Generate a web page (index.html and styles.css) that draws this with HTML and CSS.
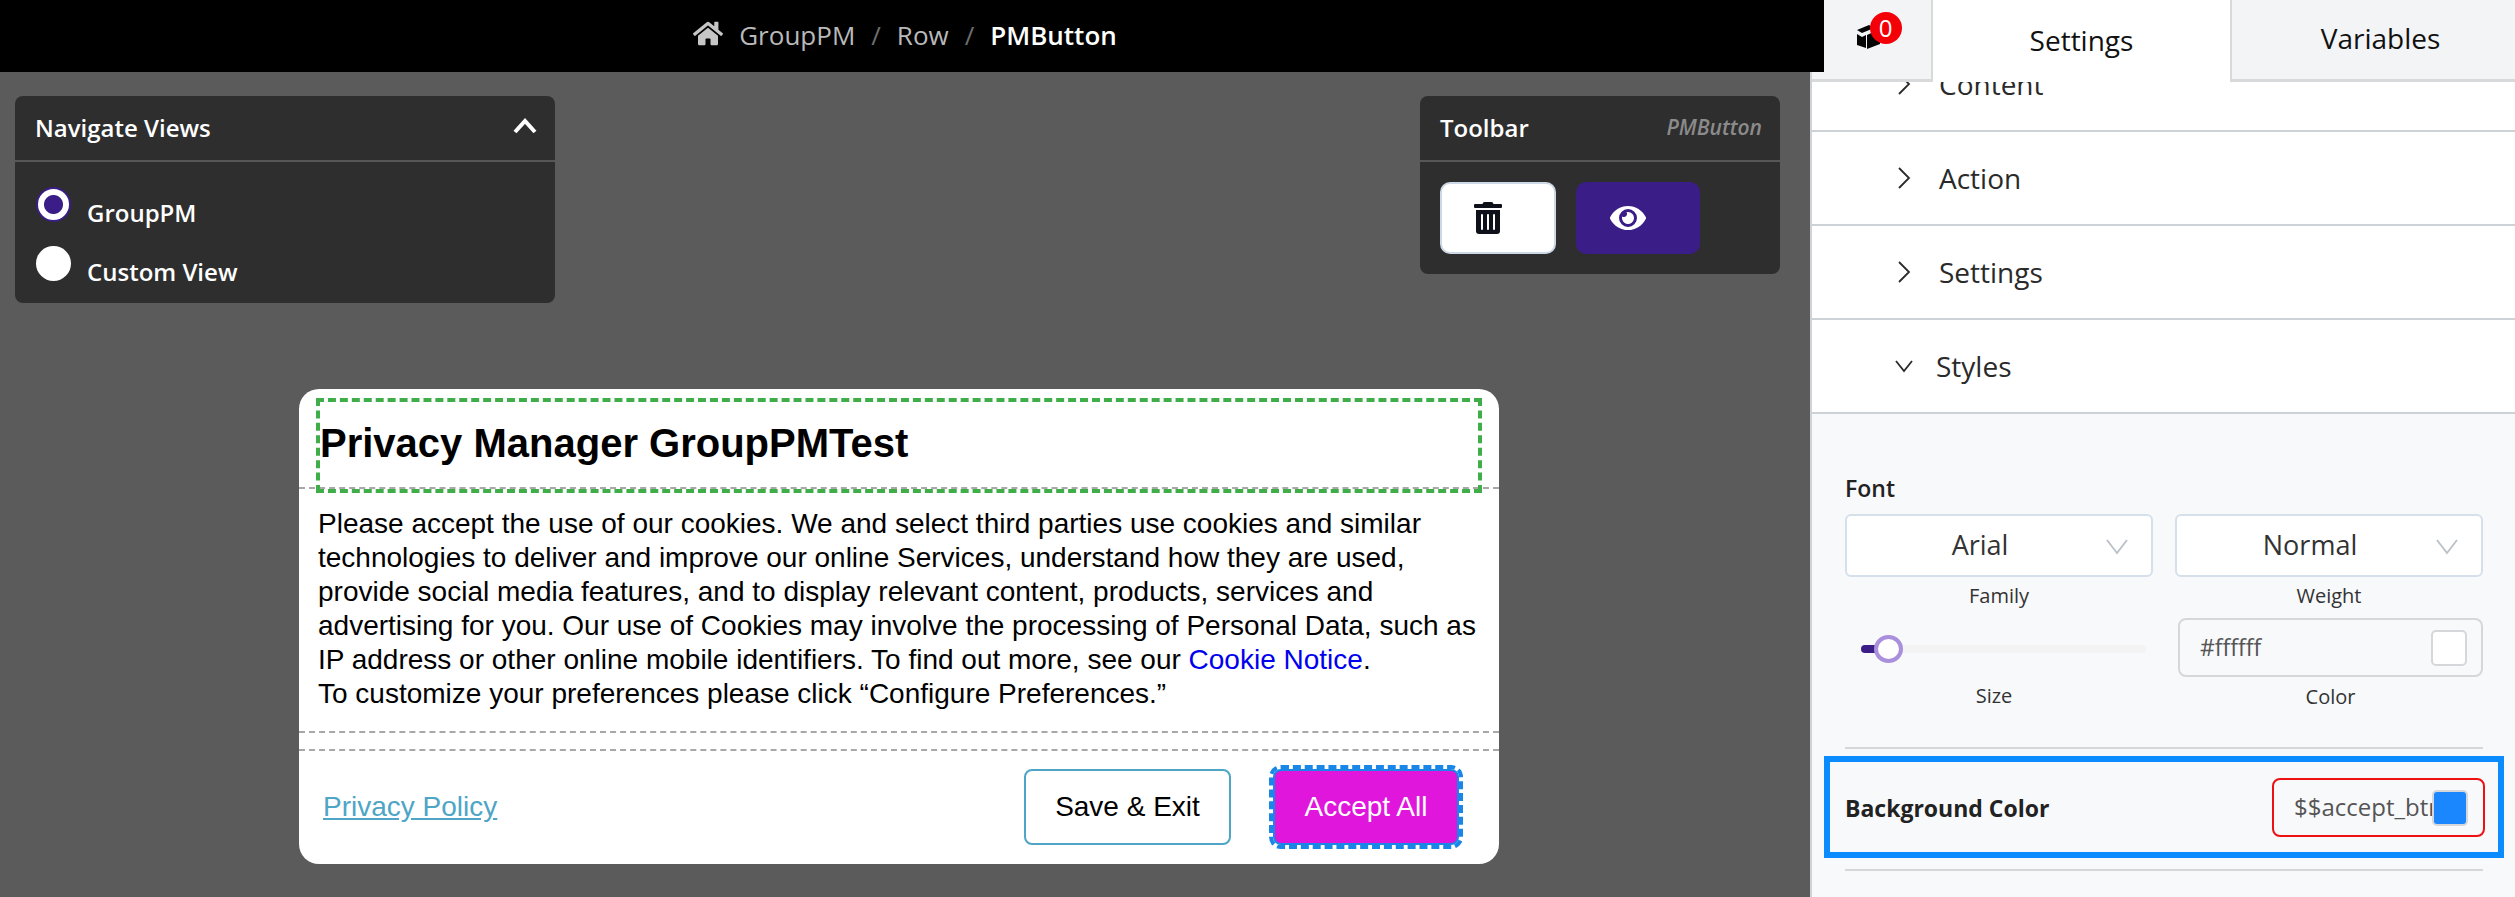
FILE: index.html
```html
<!DOCTYPE html>
<html lang="en">
<head>
<meta charset="utf-8">
<title>PMButton</title>
<link rel="stylesheet" href="styles.css">
</head>
<body>
<div class="app">
  <main class="canvas">
    <header class="crumbs">
      <svg class="home" viewBox="0 0 576 512"><path d="M280.37 148.26L96 300.11V464a16 16 0 0 0 16 16l112.06-.29a16 16 0 0 0 15.92-16V368a16 16 0 0 1 16-16h64a16 16 0 0 1 16 16v95.64a16 16 0 0 0 16 16.05L464 480a16 16 0 0 0 16-16V300L295.67 148.26a12.19 12.19 0 0 0-15.3 0zM571.6 251.47L488 182.56V44.05a12 12 0 0 0-12-12h-56a12 12 0 0 0-12 12v72.61L318.47 43a48 48 0 0 0-61 0L4.34 251.47a12 12 0 0 0-1.6 16.9l25.5 31A12 12 0 0 0 45.15 301l235.22-193.74a12.19 12.19 0 0 1 15.3 0L530.9 301a12 12 0 0 0 16.9-1.6l25.5-31a12 12 0 0 0-1.7-16.93z"/></svg>
      <span>GroupPM</span><span class="sep">/</span><span>Row</span><span class="sep">/</span><strong>PMButton</strong>
    </header>
    <div class="floats">
      <section class="float nav">
        <div class="float-head"><span>Navigate Views</span>
          <svg class="caret-up" viewBox="0 0 24 16"><path d="M2 14L12 3l10 11"/></svg>
        </div>
        <div class="nav-body">
          <label class="radio-row"><i class="radio on"></i><span>GroupPM</span></label>
          <label class="radio-row"><i class="radio"></i><span>Custom View</span></label>
        </div>
      </section>
      <section class="float tools">
        <div class="float-head"><span>Toolbar</span><em>PMButton</em></div>
        <div class="tool-body">
          <button class="tool del"><svg class="trash" viewBox="0 0 448 512"><path d="M32 464a48 48 0 0 0 48 48h288a48 48 0 0 0 48-48V128H32zm272-256a16 16 0 0 1 32 0v224a16 16 0 0 1-32 0zm-96 0a16 16 0 0 1 32 0v224a16 16 0 0 1-32 0zm-96 0a16 16 0 0 1 32 0v224a16 16 0 0 1-32 0zM432 32H312l-9.4-18.7A24 24 0 0 0 281.1 0H166.8a23.72 23.72 0 0 0-21.4 13.3L136 32H16A16 16 0 0 0 0 48v32a16 16 0 0 0 16 16h416a16 16 0 0 0 16-16V48a16 16 0 0 0-16-16z"/></svg></button>
          <button class="tool view"><svg class="eye" viewBox="0 0 576 512"><path d="M572.52 241.4C518.29 135.59 410.93 64 288 64S57.68 135.64 3.48 241.41a32.35 32.35 0 0 0 0 29.19C57.71 376.41 165.07 448 288 448s230.32-71.64 284.52-177.41a32.35 32.35 0 0 0 0-29.19zM288 400a144 144 0 1 1 144-144 143.93 143.93 0 0 1-144 144zm0-240a95.31 95.31 0 0 0-25.31 3.79 47.85 47.85 0 0 1-66.9 66.9A95.78 95.78 0 1 0 288 160z"/></svg></button>
        </div>
      </section>
    </div>
    <article class="modal">
      <div class="modal-head"><h1 class="title-box">Privacy Manager GroupPMTest</h1></div>
      <div class="modal-text">
        Please accept the use of our cookies. We and select third parties use cookies and similar<br>
        technologies to deliver and improve our online Services, understand how they are used,<br>
        provide social media features, and to display relevant content, products, services and<br>
        advertising for you. Our use of Cookies may involve the processing of Personal Data, such as<br>
        IP address or other online mobile identifiers. To find out more, see our <a class="notice">Cookie Notice</a>.<br>
        To customize your preferences please click “Configure Preferences.”
      </div>
      <div class="modal-gap"></div>
      <div class="modal-foot">
        <a class="policy">Privacy Policy</a>
        <button class="btn save">Save &amp; Exit</button>
        <button class="btn accept">Accept All</button>
      </div>
    </article>
  </main>
  <aside class="panel">
    <nav class="tabs">
      <div class="tab tab-icon">
        <span class="box-wrap">
          <svg class="box" viewBox="0 0 26 26"><path d="M1 6l12-5 5 3-12 5z"/><path d="M1 10l5 3 4-2v13L1 21z"/><path d="M11 11l13-6v15l-13 5z"/></svg>
          <b class="badge">0</b>
        </span>
      </div>
      <div class="tab active">Settings</div>
      <div class="tab vars">Variables</div>
    </nav>
    <div class="scroll">
      <div class="acc clipped"><svg class="chev" viewBox="0 0 14 24"><path d="M2 2l10 10L2 22"/></svg><span>Content</span></div>
      <div class="acc"><svg class="chev" viewBox="0 0 14 24"><path d="M2 2l10 10L2 22"/></svg><span>Action</span></div>
      <div class="acc"><svg class="chev" viewBox="0 0 14 24"><path d="M2 2l10 10L2 22"/></svg><span>Settings</span></div>
      <div class="acc"><svg class="chev-down" viewBox="0 0 20 14"><path d="M2 2l8 10 8-10"/></svg><span>Styles</span></div>
      <div class="styles">
        <div class="font-label">Font</div>
        <div class="font-grid">
          <div class="field">
            <div class="select"><span>Arial</span><svg class="sel-arrow" viewBox="0 0 22 16"><path d="M1 1l10 13L21 1"/></svg></div>
            <div class="cap">Family</div>
          </div>
          <div class="field">
            <div class="select"><span>Normal</span><svg class="sel-arrow" viewBox="0 0 22 16"><path d="M1 1l10 13L21 1"/></svg></div>
            <div class="cap">Weight</div>
          </div>
          <div class="field size">
            <div class="slider"><i class="fill"></i><i class="thumb"></i></div>
            <div class="cap">Size</div>
          </div>
          <div class="field color">
            <div class="input"><span>#ffffff</span><i class="swatch"></i></div>
            <div class="cap">Color</div>
          </div>
        </div>
        <hr class="rule">
        <div class="bg-row">
          <b>Background Color</b>
          <div class="input err"><span>$$accept_btn</span><i class="swatch blue"></i></div>
        </div>
        <hr class="rule">
      </div>
    </div>
  </aside>
</div>
</body>
</html>
```
FILE: styles.css
```css
* { box-sizing: border-box; }
html, body { margin: 0; height: 100%; }
body { font-family: "Open Sans", sans-serif; overflow: hidden; background: #5b5b5b; }
.app { display: grid; grid-template-columns: 1810px 705px; height: 897px; overflow: hidden; }

/* canvas */
.canvas { background: #5b5b5b; min-width: 0; position: relative; z-index: 2; }
.crumbs { width: 1824px; height: 72px; background: #000; display: flex; align-items: center; justify-content: center; padding: 0 14px 3px 0; color: #b9b9b9; font-size: 26px; }
.home { width: 30px; height: 27px; fill: #c6c6c6; margin-right: 16px; margin-top: -2px; }
.crumbs .sep { margin: 0 16px; color: #6e6e6e; }
.crumbs strong { color: #fff; font-weight: 600; }
.floats { display: flex; justify-content: space-between; padding: 24px 30px 0 15px; align-items: flex-start; }
.float { background: #2e2e2e; border-radius: 8px; color: #fff; }
.nav { width: 540px; height: 207px; }
.tools { width: 360px; height: 178px; }
.float-head { height: 66px; border-bottom: 2px solid #575757; display: flex; justify-content: space-between; align-items: center; padding: 0 18px 2px 20px; font-size: 24px; font-weight: 600; }
.float-head em { font-size: 21px; font-weight: 600; color: #8b8b8b; }
.caret-up { width: 24px; height: 16px; fill: none; stroke: #fff; stroke-width: 4; margin-top: -2px; }
.nav-body { padding: 25px 0 0 21px; }
.radio-row { display: flex; height: 59px; font-size: 24px; font-weight: 600; }
.radio-row span { margin: 10px 0 0 16px; line-height: 32px; }
.radio { width: 35px; height: 35px; border-radius: 50%; background: #fff; display: block; flex: none; }
.radio.on { border: 2px solid #3a1d87; background: radial-gradient(circle, #3a1d87 0 9px, #fff 10px); }
.tool-body { display: flex; gap: 20px; padding: 20px; }
.tool { height: 72px; border-radius: 10px; border: 0; padding: 0; display: flex; align-items: center; }
.del { width: 116px; background: #fff; border: 2px solid #cdd8e6; padding-left: 32px; }
.view { width: 124px; background: #3a1d87; padding-left: 34px; }
.trash { width: 28px; height: 32px; fill: #0e1119; }
.eye { width: 36px; height: 32px; fill: #fff; }

/* modal */
.modal { width: 1200px; height: 475px; margin: 86px 0 0 299px; background: #fff; border-radius: 20px; font-family: "Liberation Sans", Arial, sans-serif; color: #000; }
.modal-head { height: 100px; padding: 9px 17px 0 17px; border-bottom: 2px dashed #a8a8a8; }
.title-box { margin: 0; height: 95px; border: 4px dashed #3fae49; padding: 0 0 6px 0; display: flex; align-items: center; font-size: 40px; line-height: 1; font-weight: 700; position: relative; }
.modal-text { padding: 18px 0 0 19px; height: 244px; font-size: 28px; line-height: 34px; border-bottom: 2px dashed #a8a8a8; }
.notice { color: #0000ee; }
.modal-gap { height: 18px; border-bottom: 2px dashed #a8a8a8; }
.modal-foot { display: flex; align-items: center; height: 112px; padding: 0 40px 0 24px; }
.policy { color: #4ea5c6; font-size: 28px; text-decoration: underline; margin-right: auto; }
.btn { font-family: inherit; font-size: 28px; height: 76px; border-radius: 8px; }
.save { width: 207px; background: #fff; border: 2px solid #4ea5c6; color: #000; margin-right: 42px; }
.accept { width: 186px; background: #e016dc; border: 2px solid #1a87e8; color: #fff; outline: 4px dashed #1a87e8; outline-offset: 0; }

/* panel */
.panel { background: #fff; border-left: 2px solid #cfd3d8; position: relative; min-width: 0; }
.tabs { display: flex; height: 82px; position: relative; z-index: 1; font-size: 28px; }
.tab { background: #f3f4f6; border-bottom: 3px solid #d8d9db; display: flex; align-items: center; justify-content: center; flex: 1; padding-bottom: 3px; color: #111; }
.tab-icon { flex: none; width: 121px; border-right: 2px solid #d8d9db; padding-left: 12px; }
.tab.active { flex: none; width: 299px; background: #fff; border-bottom: 0; border-right: 2px solid #d8d9db; }
.tab.vars { padding-left: 14px; }
.box-wrap { position: relative; display: block; width: 44px; height: 44px; margin-top: -8px; }
.box { position: absolute; left: 0; top: 12px; width: 26px; height: 26px; fill: #050505; }
.badge { position: absolute; left: 14px; top: 0; width: 32px; height: 32px; border-radius: 50%; background: #f40008; color: #fff; font-size: 24px; font-weight: 400; line-height: 32px; text-align: center; }
.scroll { margin-top: -44px; height: 859px; overflow: hidden; }
.acc { height: 94px; border-bottom: 2px solid #cdd2d7; display: flex; align-items: center; padding-left: 85px; font-size: 28px; color: #2a2a2a; }
.acc span { margin-left: 28px; }
.chev { width: 14px; height: 24px; fill: none; stroke: #2a2a2a; stroke-width: 1.8; }
.chev-down { width: 20px; height: 14px; fill: none; stroke: #2a2a2a; stroke-width: 1.8; margin: 0 -6px 0 0; margin-left: -3px; }
.styles { background: #f8f9fb; height: 484px; padding: 57px 30px 0 33px; position: relative; }
.font-label { font-size: 23px; font-weight: 600; line-height: 34px; color: #222; margin-bottom: 9px; }
.font-grid { display: grid; grid-template-columns: 308px 308px; column-gap: 22px; }
.field { text-align: center; color: #333; }
.select { height: 63px; background: #fff; border: 2px solid #d5e0ea; border-radius: 6px; display: flex; align-items: center; justify-content: center; position: relative; padding: 0 38px 2px 0; font-size: 27px; color: #333; }
.sel-arrow { position: absolute; right: 23px; top: 23px; width: 22px; height: 16px; fill: none; stroke: #b9c0c8; stroke-width: 1.8; }
.cap { font-size: 20px; line-height: 28px; margin-top: 5px; }
.size .cap { margin-top: 29px; margin-left: -10px; }
.slider { position: relative; height: 8px; margin: 35px 0 0 16px; width: 285px; background: #f3f3f3; border-radius: 4px; }
.fill { position: absolute; left: 0; top: 0; width: 20px; height: 8px; background: #3a1d87; border-radius: 4px; }
.thumb { position: absolute; left: 13px; top: -10px; width: 29px; height: 28px; border-radius: 50%; background: #fff; border: 4px solid #a98fdc; }
.color { margin-left: 3px; margin-top: 8px; }
.color .cap { margin-top: 6px; }
.input { height: 59px; border: 2px solid #d5d7da; border-radius: 8px; display: flex; align-items: center; padding: 0 0 2px 20px; font-size: 23px; color: #555; position: relative; overflow: hidden; white-space: nowrap; text-align: left; }
.swatch { position: absolute; right: 14px; top: 10px; width: 36px; height: 36px; background: #fff; border: 2px solid #d5d7da; border-radius: 5px; }
.swatch.blue { background: #1b87ff; top: 10px; right: 15px; }
.rule { border: 0; height: 2px; background: #d5d7da; margin: 0; width: 638px; }
.font-grid + .rule { margin-top: 36px; }
.bg-row { margin: 7px -19px 11px -21px; height: 102px; border: 6px solid #0a8cff; display: flex; align-items: center; justify-content: space-between; padding: 0 13px 0 15px; }
.bg-row b { font-size: 23px; font-weight: 700; color: #222; padding-top: 2px; }
.input.err { width: 213px; border-color: #ef1111; font-size: 24px; }
```
